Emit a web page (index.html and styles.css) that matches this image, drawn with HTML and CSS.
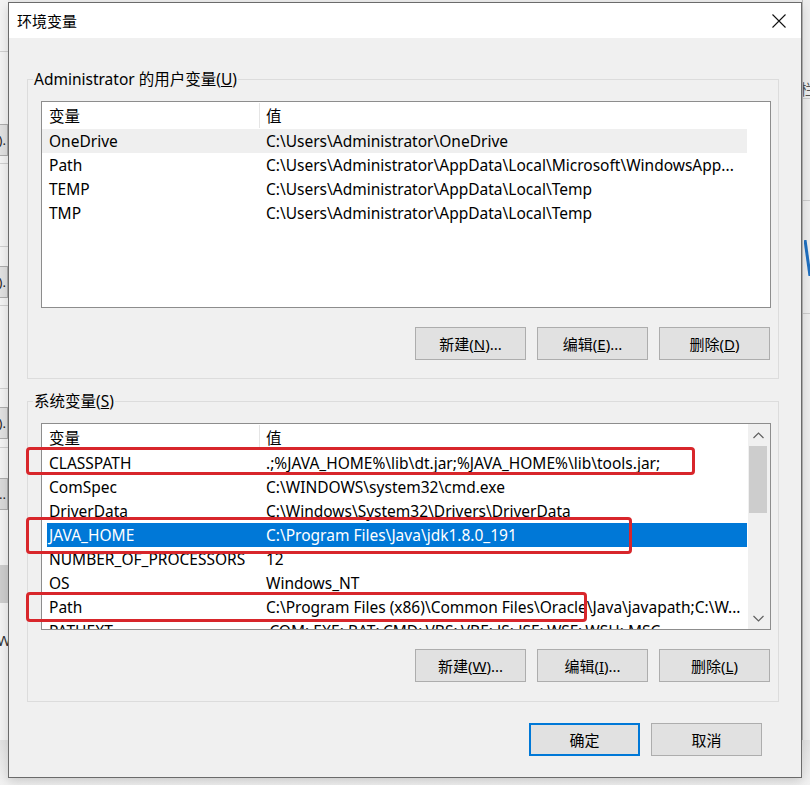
FILE: index.html
```html
<!DOCTYPE html>
<html lang="zh-CN">
<head>
<meta charset="utf-8">
<title>环境变量</title>
<link rel="stylesheet" href="styles.css">
</head>
<body>
<div class="desk">
  <div class="bg-left">
    <div class="bl-line" style="top:51px"></div>
    <div class="bl-btn" style="top:124px">).</div>
    <div class="bl-line" style="top:163px"></div>
    <div class="bl-line" style="top:246px"></div>
    <div class="bl-btn" style="top:266px">).</div>
    <div class="bl-line" style="top:305px"></div>
    <div class="bl-line" style="top:388px"></div>
    <div class="bl-btn" style="top:407px">).</div>
    <div class="bl-line" style="top:447px"></div>
    <div class="bl-btn dim" style="top:478px">..</div>
    <div class="bl-block" style="top:565px"></div>
    <div class="bl-text" style="top:630px">Wi</div>
  </div>
  <div class="bg-right">
    <div class="br-text" style="top:78px">栏</div>
    <div class="br-line" style="top:98px"></div>
    <div class="br-line" style="top:200px"></div>
    <svg class="br-slash" width="8" height="36" viewBox="0 0 8 36"><path d="M1 0 L6 36" stroke="#1f6fbf" stroke-width="3"/></svg>
    <div class="br-line" style="top:313px"></div>
  </div>
  <div class="bg-bottom"></div>

  <div class="dialog">
    <div class="titlebar">
      <span class="title">环境变量</span>
      <svg class="close" width="14" height="14" viewBox="0 0 14 14"><path d="M0.5 0.5 L13.5 13.5 M13.5 0.5 L0.5 13.5" stroke="#111" stroke-width="1.1" fill="none"/></svg>
    </div>
    <div class="content">
      <div class="group">
        <span class="legend">Administrator 的用户变量(<u>U</u>)</span>
        <div class="list">
          <div class="rows">
            <div class="hdr"><span class="c1 hc1">变量</span><span class="c2">值</span></div>
            <div class="row hover"><span class="c1">OneDrive</span><span class="c2">C:\Users\Administrator\OneDrive</span></div>
            <div class="row"><span class="c1">Path</span><span class="c2">C:\Users\Administrator\AppData\Local\Microsoft\WindowsApp...</span></div>
            <div class="row"><span class="c1">TEMP</span><span class="c2">C:\Users\Administrator\AppData\Local\Temp</span></div>
            <div class="row"><span class="c1">TMP</span><span class="c2">C:\Users\Administrator\AppData\Local\Temp</span></div>
          </div>
        </div>
        <div class="btnrow">
          <button class="btn">新建(<u>N</u>)...</button>
          <button class="btn">编辑(<u>E</u>)...</button>
          <button class="btn">删除(<u>D</u>)</button>
        </div>
      </div>

      <div class="group g2">
        <span class="legend">系统变量(<u>S</u>)</span>
        <div class="list">
          <div class="rows">
            <div class="hdr"><span class="c1 hc1">变量</span><span class="c2">值</span></div>
            <div class="row"><span class="c1">CLASSPATH</span><span class="c2">.;%JAVA_HOME%\lib\dt.jar;%JAVA_HOME%\lib\tools.jar;</span></div>
            <div class="row"><span class="c1">ComSpec</span><span class="c2">C:\WINDOWS\system32\cmd.exe</span></div>
            <div class="row"><span class="c1">DriverData</span><span class="c2">C:\Windows\System32\Drivers\DriverData</span></div>
            <div class="row sel"><span class="c1">JAVA_HOME</span><span class="c2">C:\Program Files\Java\jdk1.8.0_191</span></div>
            <div class="row"><span class="c1">NUMBER_OF_PROCESSORS</span><span class="c2">12</span></div>
            <div class="row"><span class="c1">OS</span><span class="c2">Windows_NT</span></div>
            <div class="row"><span class="c1">Path</span><span class="c2">C:\Program Files (x86)\Common Files\Oracle\Java\javapath;C:\W...</span></div>
            <div class="row"><span class="c1">PATHEXT</span><span class="c2">.COM;.EXE;.BAT;.CMD;.VBS;.VBE;.JS;.JSE;.WSF;.WSH;.MSC</span></div>
          </div>
          <div class="vscroll">
            <div class="sb-btn"><svg width="11" height="7" viewBox="0 0 11 7"><path d="M0.5 6 L5.5 1 L10.5 6" stroke="#606060" stroke-width="1.2" fill="none"/></svg></div>
            <div class="sb-thumb"></div>
            <div class="sb-space"></div>
            <div class="sb-btn"><svg width="11" height="7" viewBox="0 0 11 7"><path d="M0.5 1 L5.5 6 L10.5 1" stroke="#606060" stroke-width="1.2" fill="none"/></svg></div>
          </div>
        </div>
        <div class="btnrow">
          <button class="btn">新建(<u>W</u>)...</button>
          <button class="btn">编辑(<u>I</u>)...</button>
          <button class="btn">删除(<u>L</u>)</button>
        </div>
      </div>

      <div class="footer">
        <button class="btn default">确定</button>
        <button class="btn">取消</button>
      </div>
    </div>
  </div>

  <div class="mark m1"></div>
  <div class="mark m2"></div>
  <div class="mark m3"></div>
</div>
</body>
</html>
```

FILE: styles.css
```css
* { box-sizing: border-box; }
html, body { margin: 0; padding: 0; }
body {
  font-family: "Noto Sans", "Noto Sans CJK SC", sans-serif;
  font-size: 15.5px;
  color: #000;
  background: #ececec;
}
.desk {
  position: relative;
  width: 810px;
  height: 785px;
  overflow: hidden;
  background: #ececec;
}

/* backdrop windows */
.bg-left {
  position: absolute;
  left: 0; top: 0;
  width: 8px; height: 740px;
  background: #f3f3f3;
  overflow: hidden;
}
.bl-line { position: absolute; left: 0; width: 8px; height: 1px; background: #cfcfcf; }
.bl-btn {
  position: absolute; left: -14px; width: 22px; height: 32px;
  background: #e1e1e1; border: 1px solid #adadad; border-left: 0;
  padding-right: 1px;
  line-height: 30px; font-size: 13px; color: #222;
  text-align: right;
  white-space: nowrap; overflow: hidden;
}
.bl-btn.dim { background: #d9d9d9; }
.bl-block { position: absolute; left: 0; width: 8px; height: 38px; background: #cdcdcd; }
.bl-text { position: absolute; left: -3px; font-size: 15px; color: #333; }
.bg-right {
  position: absolute;
  left: 802px; top: 0;
  width: 8px; height: 785px;
  background: #ededed;
  border-left: 1px solid #b8b8b8;
  overflow: hidden;
}
.br-line { position: absolute; left: 0; width: 8px; height: 1px; background: #cccccc; }
.br-text { position: absolute; left: -3px; font-size: 15px; color: #555; }
.br-slash { position: absolute; left: 1px; top: 240px; }
.bg-bottom {
  position: absolute;
  left: 0; top: 740px;
  width: 810px; height: 45px;
  background: linear-gradient(#e2e2e2, #f2f2f2);
}

/* dialog */
.dialog {
  position: absolute;
  left: 8px; top: 2px;
  width: 794px; height: 776px;
  border: 1px solid #6b6b6b;
  background: #f0f0f0;
  display: flex;
  flex-direction: column;
  box-shadow: 0 4px 10px rgba(0,0,0,0.15);
}
.titlebar {
  height: 35px;
  background: #fff;
  display: flex;
  align-items: center;
  justify-content: space-between;
  padding: 0 15px 0 8px;
}
.title { font-size: 15px; line-height: 20px; }
.close { display: block; }

.content {
  flex: 1;
  padding: 41px 22px 0 18px;
  display: flex;
  flex-direction: column;
}
.group {
  position: relative;
  border: 1px solid #dcdcdc;
  padding: 21px 7px 18px 13px;
}
.group.g2 { margin-top: 22px; padding-bottom: 19px; }
.legend {
  position: absolute;
  top: -11px; left: 5px;
  padding: 0 1px;
  line-height: 20px;
  background: #f0f0f0;
  white-space: nowrap;
}

.list {
  width: 730px;
  height: 207px;
  border: 1px solid #8d8d8d;
  background: #fff;
  overflow: hidden;
  display: flex;
  align-items: flex-start;
}
.rows { width: 705px; flex: none; }
.hdr {
  height: 27px;
  display: flex;
  align-items: center;
}
.hc1 {
  height: 25px;
  border-right: 1px solid #e5e5e5;
  display: flex;
  align-items: center;
}
.row {
  height: 24px;
  display: flex;
  align-items: center;
  white-space: nowrap;
}
.c1 {
  width: 218px;
  flex: none;
  padding-left: 7px;
  overflow: hidden;
  white-space: nowrap;
}
.c2 {
  flex: 1;
  padding-left: 6px;
  overflow: hidden;
  white-space: nowrap;
}
.row.hover { background: #efefef; }
.row.sel {
  background: linear-gradient(to right, transparent 5px, #0078d7 5px);
  color: #fff;
}

.vscroll {
  width: 22px;
  height: 205px;
  flex: none;
  margin-left: 1px;
  background: #f0f0f0;
  display: flex;
  flex-direction: column;
}
.sb-btn {
  height: 22px;
  display: flex;
  align-items: center;
  justify-content: center;
}
.sb-btn svg { display: block; margin-right: 2px; }
.sb-thumb {
  height: 67px;
  margin: 0 3px 0 1px;
  background: #cdcdcd;
}
.sb-space { flex: 1; }

.btnrow {
  margin-top: 19px;
  display: flex;
  justify-content: flex-end;
  gap: 11px;
  padding-right: 1px;
}
.btn {
  width: 111px;
  height: 33px;
  background: #e1e1e1;
  border: 1px solid #adadad;
  font-family: "Noto Sans", "Noto Sans CJK SC", sans-serif;
  font-size: 15px;
  color: #000;
  padding: 0;
  margin: 0;
}
.btn.default { border: 2px solid #0078d7; }
.footer {
  margin-top: 21px;
  display: flex;
  justify-content: flex-end;
  gap: 11px;
  padding-right: 17px;
}

/* annotation overlays */
.mark {
  position: absolute;
  border: 3px solid #d8262b;
  border-radius: 4px;
}
.m1 { left: 26px; top: 447px; width: 669px; height: 28px; }
.m2 { left: 26px; top: 517px; width: 606px; height: 37px; }
.m3 { left: 26px; top: 592px; width: 561px; height: 30px; }
```
